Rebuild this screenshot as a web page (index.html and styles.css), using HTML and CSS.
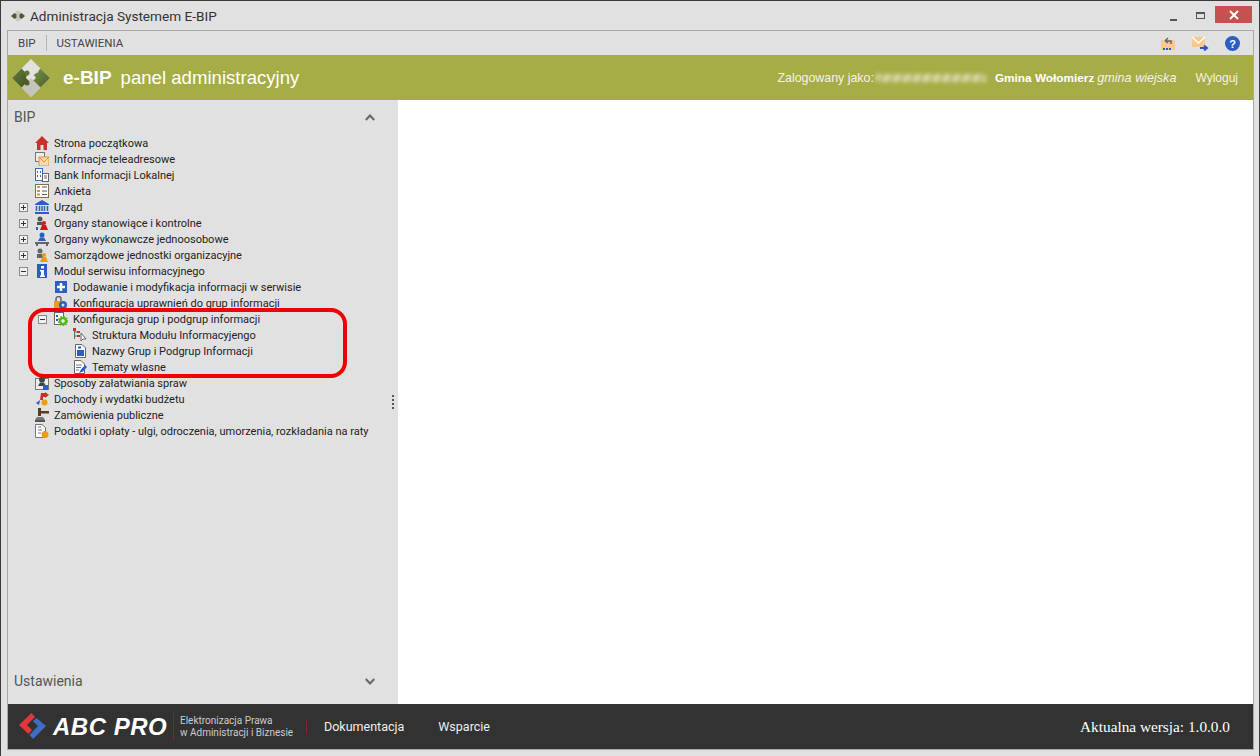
FILE: index.html
```html
<!DOCTYPE html>
<html lang="pl">
<head>
  <meta charset="UTF-8" />
  <title>Administracja Systemem E-BIP</title>
  <link rel="stylesheet" href="styles.css">
</head>
<body>
  <div class="window">
    <div class="titlebar">
      <svg class="app-icon" width="14" height="12" viewBox="0 0 14 12">
        <path d="M7 0 L14 6 L7 12 L0 6Z" fill="#c9c9c0"/>
        <path d="M0 6 L3.500 3 L6 5 L5 6 L6 7 L3.500 9Z" fill="#4d5a35"/>
        <path d="M14 6 L10.500 3 L8 5 L9 6 L8 7 L10.500 9Z" fill="#4d5a35"/>
      </svg>
      <span class="title">Administracja Systemem E-BIP</span>
      <div class="win-buttons">
        <span class="btn-min"></span>
        <span class="btn-max"></span>
        <span class="btn-close">
          <svg width="10" height="10" viewBox="0 0 10 10"><path d="M1 1 L9 9 M9 1 L1 9" stroke="#fff" stroke-width="2"/></svg>
        </span>
      </div>
    </div>

    <div class="frame">
      <div class="menubar">
        <span class="menu-item">BIP</span>
        <span class="menu-sep"></span>
        <span class="menu-item">USTAWIENIA</span>
        <div class="menu-icons">
          <svg width="16" height="16" viewBox="0 0 16 16">
            <rect x="1" y="5" width="14" height="10" fill="#fcc892"/>
            <path d="M5 6 L8 3 M5 6 L8 8 M5 6 H11 V9" stroke="#666" stroke-width="1.500" fill="none"/>
            <path d="M3 13h2v2H3zM6 13h2v2H6zM9 13h2v2H9z" fill="#2b58c4"/>
          </svg>
          <svg width="17" height="16" viewBox="0 0 17 16">
            <rect x="0" y="2" width="13" height="10" fill="#fcc892"/>
            <path d="M0 2 L6.500 8 L13 2" stroke="#fff" stroke-width="1.500" fill="none"/>
            <path d="M8 13 H14 M12 10.500 L15 13 L12 15.500" stroke="#2b58c4" stroke-width="2" fill="none"/>
          </svg>
          <svg width="15" height="15" viewBox="0 0 15 15">
            <circle cx="7.500" cy="7.500" r="7.500" fill="#2a5ec4"/>
            <text x="7.500" y="11.500" class="help-mark" text-anchor="middle">?</text>
          </svg>
        </div>
      </div>

      <header class="banner">
        <svg class="banner-logo" width="38" height="38" viewBox="0 0 38 38">
          <defs>
            <linearGradient id="leaf-l" x1="0" y1="0" x2="1" y2="1">
              <stop offset="0" stop-color="#66803a"/>
              <stop offset="1" stop-color="#3d4f22"/>
            </linearGradient>
            <linearGradient id="leaf-r" x1="0" y1="0" x2="1" y2="1">
              <stop offset="0" stop-color="#7a9146"/>
              <stop offset="1" stop-color="#4a5f2b"/>
            </linearGradient>
          </defs>
          <path d="M19 0 L38 19 L19 38 L0 19Z" fill="#e2e2dc"/>
          <path d="M19 38 L9.500 28.500 L19 19 L28.500 28.500Z" fill="#c4c4ba"/>
          <path d="M0 19 L9.500 9.500 L16 16 C13 17 14 21 17 21 L9.500 28.500Z" fill="url(#leaf-l)"/>
          <circle cx="15" cy="14" r="2.500" fill="#5d7435"/>
          <path d="M38 19 L28.500 9.500 L21 17 C24 16 25 21 21 21 L28.500 28.500Z" fill="url(#leaf-r)"/>
          <circle cx="24" cy="11.500" r="2.500" fill="#e2e2dc"/>
          <circle cx="15" cy="24" r="2.500" fill="#4a5f2b"/>
        </svg>
        <span class="brand">e-BIP</span>
        <span class="brand-sub">panel administracyjny</span>
        <div class="user">
          <span class="user-label">Zalogowany jako:</span>
          <span class="blurred"></span>
          <span class="user-name">Gmina Wołomierz</span>
          <em class="user-kind">gmina wiejska</em>
        </div>
        <span class="logout">Wyloguj</span>
      </header>

      <div class="main">
        <aside class="sidebar">
          <div class="acc-head acc-head-top">
            <span>BIP</span>
            <svg width="10" height="7" viewBox="0 0 10 7"><path d="M0.800 6 L5 1.500 L9.200 6" stroke="#666" stroke-width="2" fill="none"/></svg>
          </div>
          <ul class="tree">
            <li class="row"><span class="tg"></span><svg class="ic" viewBox="0 0 14 14"><path d="M7 0 L14 7 H12 V14 H8.500 V9 H5.500 V14 H2 V7 H0Z" fill="#c8312b"/></svg>Strona początkowa</li>
            <li class="row"><span class="tg"></span><svg class="ic" viewBox="0 0 14 14"><rect x="0.500" y="0.500" width="9" height="9" fill="#eee" stroke="#777"/><rect x="4" y="5" width="10" height="9" fill="#fcd9a8" stroke="#e8903a"/><path d="M4 5 L9 10 L14 5" stroke="#e8903a" fill="none"/></svg>Informacje teleadresowe</li>
            <li class="row"><span class="tg"></span><svg class="ic" viewBox="0 0 14 14"><rect x="0.500" y="0.500" width="7" height="12" fill="#fff" stroke="#2f6db5"/><path d="M2 3h1v2H2zM5 3h1v2H5zM2 7h1v2H2zM5 7h1v2H5z" fill="#2f6db5"/><rect x="7.500" y="5.500" width="6" height="8" fill="#fff" stroke="#666"/><path d="M9 8h3M9 10h3" stroke="#666"/></svg>Bank Informacji Lokalnej</li>
            <li class="row"><span class="tg"></span><svg class="ic" viewBox="0 0 14 14"><rect x="0.500" y="0.500" width="13" height="13" fill="#fff" stroke="#8a6d50"/><path d="M2 3h3M2 7h3M2 10.500h3" stroke="#e8903a" stroke-width="2"/><path d="M7 3h5M7 7h5M7 10.500h5" stroke="#555"/></svg>Ankieta</li>
            <li class="row"><span class="tg plus"></span><svg class="ic" viewBox="0 0 14 14"><path d="M7 0 L14 4 V5 H0 V4Z" fill="#2a5ec4"/><path d="M1.500 6v5M4.500 6v5M7 6v5M9.500 6v5M12.500 6v5" stroke="#2a5ec4" stroke-width="1.500"/><rect x="0" y="12" width="14" height="2" fill="#2a5ec4"/></svg>Urząd</li>
            <li class="row"><span class="tg plus"></span><svg class="ic" viewBox="0 0 14 14"><circle cx="5" cy="3" r="2.500" fill="#555"/><path d="M2 6h6v3H2z" fill="#555"/><circle cx="9" cy="7" r="2" fill="#d7141a"/><path d="M5 14 L7 9 H11 L13 14Z" fill="#d7141a"/><path d="M2 11v3" stroke="#2a5ec4" stroke-width="2"/></svg>Organy stanowiące i kontrolne</li>
            <li class="row"><span class="tg plus"></span><svg class="ic" viewBox="0 0 14 14"><circle cx="7" cy="3" r="2.500" fill="#2a5ec4"/><path d="M3 9 L5 5.500 H9 L11 9Z" fill="#2a5ec4"/><rect x="0" y="10" width="14" height="2" fill="#666"/><path d="M2 12v2M12 12v2" stroke="#666" stroke-width="2"/></svg>Organy wykonawcze jednoosobowe</li>
            <li class="row"><span class="tg plus"></span><svg class="ic" viewBox="0 0 14 14"><circle cx="5" cy="3" r="2.500" fill="#666"/><path d="M2 6h6v4H2z" fill="#666"/><circle cx="9" cy="7" r="2" fill="#f29a12"/><path d="M5 14 L7 9 H11 L13 14Z" fill="#f29a12"/></svg>Samorządowe jednostki organizacyjne</li>
            <li class="row"><span class="tg minus"></span><svg class="ic" viewBox="0 0 14 14"><rect x="2" y="0" width="10" height="14" fill="#2a5ec4"/><rect x="6" y="2" width="3" height="2.500" fill="#fff"/><path d="M5 6h4v5.500h1V13H5v-1.500h1V7.500H5z" fill="#fff"/></svg>Moduł serwisu informacyjnego</li>
            <li class="row lv1"><span class="tg"></span><svg class="ic" viewBox="0 0 14 14"><rect x="1" y="1" width="12" height="12" fill="#2a5ec4"/><path d="M7 3v8M3 7h8" stroke="#fff" stroke-width="2.500"/></svg>Dodawanie i modyfikacja informacji w serwisie</li>
            <li class="row lv1"><span class="tg"></span><svg class="ic" viewBox="0 0 14 14"><path d="M2 5V3a2.500 2.500 0 0 1 5 0v2" stroke="#666" fill="none" stroke-width="1.500"/><rect x="0" y="5" width="7" height="7" fill="#f29a12"/><circle cx="9" cy="9" r="4" fill="#2a5ec4"/><circle cx="9" cy="9" r="1.500" fill="#e1e1e1"/></svg>Konfiguracja uprawnień do grup informacji</li>
            <li class="row lv1"><span class="tg minus"></span><svg class="ic" viewBox="0 0 14 14"><rect x="0.500" y="0.500" width="9" height="12" fill="#fff" stroke="#666"/><path d="M2 3h2v2H2zM2 7h2v2H2z" fill="#2a5ec4"/><circle cx="9" cy="9" r="3" fill="#fff" stroke="#58b51a" stroke-width="2.500"/><circle cx="9" cy="9" r="4.500" fill="none" stroke="#58b51a" stroke-width="1.500" stroke-dasharray="1.500 1.500"/></svg>Konfiguracja grup i podgrup informacji</li>
            <li class="row lv2"><span class="tg"></span><svg class="ic" viewBox="0 0 14 14"><path d="M1.500 1v10M1.500 4h3M1.500 8h3" stroke="#666"/><path d="M0 0h3v3H0zM4 3h3v2H4zM4 7h3v2H4z" fill="#c8312b"/><path d="M8 5 V13 L10 11 L13 11Z" fill="#fff" stroke="#666"/></svg>Struktura Modułu Informacyjengo</li>
            <li class="row lv2"><span class="tg"></span><svg class="ic" viewBox="0 0 14 14"><path d="M2.500 0.500H9L12.500 4V13.500H2.500Z" fill="#fff" stroke="#666"/><rect x="5" y="2.500" width="3" height="2" fill="#2a5ec4"/><rect x="4" y="6" width="7" height="6" fill="#2a5ec4"/></svg>Nazwy Grup i Podgrup Informacji</li>
            <li class="row lv2"><span class="tg"></span><svg class="ic" viewBox="0 0 14 14"><path d="M1.500 0.500H8L11.500 4V13.500H1.500Z" fill="#fff" stroke="#666"/><path d="M3 5h6M3 7.500h5M3 10h3" stroke="#777"/><path d="M6 13 L8 9.500 L12 5 L14 7 L10 11.500Z" fill="#2a5ec4"/></svg>Tematy własne</li>
            <li class="row"><span class="tg"></span><svg class="ic" viewBox="0 0 14 14"><rect x="0.500" y="2.500" width="13" height="11" fill="#eee" stroke="#777"/><circle cx="7" cy="3.500" r="3" fill="#444"/><path d="M3 10 L5 6.500 H9 L11 10Z" fill="#444"/><rect x="8" y="9" width="5" height="5" fill="#2a5ec4"/></svg>Sposoby załatwiania spraw</li>
            <li class="row"><span class="tg"></span><svg class="ic" viewBox="0 0 14 14"><path d="M6 1 H10 V0 L14 3 L10 6 V5 H8 V8 H5Z" fill="#c8312b"/><path d="M5 8 L1 11 L4 13Z" fill="#2a5ec4"/><circle cx="9.500" cy="10.500" r="3" fill="#f29a12"/></svg>Dochody i wydatki budżetu</li>
            <li class="row"><span class="tg"></span><svg class="ic" viewBox="0 0 14 14"><rect x="3" y="0" width="3" height="8" fill="#5a3d22"/><rect x="6" y="3" width="8" height="2.500" fill="#5a3d22"/><path d="M2 9h6l2 3H0z" fill="#777"/><rect x="0" y="12" width="10" height="2" fill="#555"/></svg>Zamówienia publiczne</li>
            <li class="row"><span class="tg"></span><svg class="ic" viewBox="0 0 14 14"><path d="M0.500 0.500H7L10.500 3.500V13.500H0.500Z" fill="#fff" stroke="#777"/><path d="M3 3h3M3 6h4M3 9h3" stroke="#777"/><circle cx="10" cy="10.500" r="3.500" fill="#f29a12"/></svg>Podatki i opłaty - ulgi, odroczenia, umorzenia, rozkładania na raty</li>
          </ul>
          <div class="highlight"></div>
          <div class="acc-head acc-head-bottom">
            <span>Ustawienia</span>
            <svg width="10" height="7" viewBox="0 0 10 7"><path d="M0.800 1 L5 5.500 L9.200 1" stroke="#666" stroke-width="2" fill="none"/></svg>
          </div>
        </aside>
        <div class="splitter"><i></i><i></i><i></i><i></i></div>
        <section class="content"></section>
      </div>

      <footer class="footer">
        <svg class="abc-mark" width="28" height="27" viewBox="0 0 28 27">
          <path d="M0 12 L12.500 0 L16 4 L8 12 L13 17 L9.500 21Z" fill="#e0383a"/>
          <path d="M27 13 L14 26 L10.500 22 L19 13 L14 8 L17.500 5Z" fill="#3f6cc4"/>
        </svg>
        <span class="abc-name">ABC PRO</span>
        <span class="abc-tag">Elektronizacja Prawa<br>w Administracji i Biznesie</span>
        <a class="foot-link foot-first">Dokumentacja</a>
        <a class="foot-link">Wsparcie</a>
        <span class="version">Aktualna wersja: 1.0.0.0</span>
      </footer>
    </div>
  </div>
</body>
</html>
```

FILE: styles.css
```css
html, body {
  margin: 0;
  height: 100%;
}

body {
  font-family: "Liberation Sans", Arial, sans-serif;
  overflow: hidden;
}

.window {
  box-sizing: border-box;
  width: 1260px;
  height: 756px;
  display: flex;
  flex-direction: column;
  background: #e1e1e1;
  border: 1px solid #3a3a3a;
  border-bottom: 0;
  color: #333;
}

.titlebar {
  height: 29px;
  flex: none;
  display: flex;
  align-items: center;
  padding-left: 10px;
}

.app-icon {
  margin-right: 5px;
}

.title {
  font-family: Roboto, sans-serif;
  font-size: 13.6px;
  color: #333;
}

.win-buttons {
  margin-left: auto;
  display: flex;
  align-items: center;
  margin-right: 7px;
  margin-top: -2px;
}

.btn-min {
  width: 7px;
  height: 2px;
  margin-top: 11px;
  margin-right: 19px;
  background: #555;
}

.btn-max {
  box-sizing: border-box;
  width: 9px;
  height: 7px;
  margin-top: 1px;
  margin-right: 10px;
  border: 1px solid #555;
  border-top-width: 2px;
}

.btn-close {
  width: 37px;
  height: 17px;
  background: #c75050;
  display: flex;
  align-items: center;
  justify-content: center;
}

.frame {
  flex: 1;
  min-height: 0;
  margin: 0 5px 6px 6px;
  border: 1px solid #a9a9a9;
  display: flex;
  flex-direction: column;
}

.menubar {
  height: 24px;
  flex: none;
  display: flex;
  align-items: center;
  font-family: Roboto, sans-serif;
  font-size: 11.5px;
  padding-left: 10px;
  color: #444;
}

.menu-sep {
  width: 1px;
  height: 16px;
  background: #b5b5b5;
  margin: 0 10px;
}

.menu-icons {
  margin-left: auto;
  margin-right: 13px;
  display: flex;
  align-items: center;
  gap: 16px;
}

.help-mark {
  font: bold 11px "Liberation Sans", sans-serif;
  fill: #fff;
}

.banner {
  height: 45px;
  flex: none;
  background: #a6ad46;
  display: flex;
  align-items: center;
  color: #fff;
  padding-left: 4px;
  font-size: 12px;
}

.banner-logo {
  margin-right: 13px;
}

.brand {
  font-size: 19px;
  font-weight: bold;
  margin-right: 9px;
}

.brand-sub {
  font-size: 18.6px;
}

.user {
  margin-left: auto;
  display: flex;
  align-items: center;
}

.user-label {
  font-size: 12.4px;
  color: #f4f4e4;
}

.blurred {
  width: 110px;
  height: 8px;
  margin: 0 9px 0 2px;
  background: repeating-linear-gradient(115deg, rgba(255, 255, 255, 0.6) 0 5px, rgba(255, 255, 255, 0.2) 5px 9px);
  filter: blur(2px);
}

.user-name {
  font-size: 11.8px;
  font-weight: bold;
  margin-right: 3px;
}

.user-kind {
  font-size: 12.6px;
  color: #f4f4e4;
}

.logout {
  margin-left: 19px;
  margin-right: 15px;
  color: #f4f4e4;
}

.main {
  flex: 1;
  min-height: 0;
  display: flex;
}

.sidebar {
  position: relative;
  width: 380px;
  flex: none;
  display: flex;
  flex-direction: column;
}

.acc-head {
  height: 34px;
  flex: none;
  display: flex;
  align-items: center;
  justify-content: space-between;
  padding: 0 13px 0 6px;
  font-family: Roboto, sans-serif;
  font-size: 14px;
  color: #555;
}

.acc-head-bottom {
  margin-top: auto;
  margin-bottom: 6px;
}

.tree {
  list-style: none;
  margin: 0;
  padding: 1px 0 0 11px;
  font-family: Roboto, sans-serif;
  font-size: 11px;
  color: #222;
}

.row {
  height: 16px;
  display: flex;
  align-items: center;
  white-space: nowrap;
}

.lv1 {
  padding-left: 19px;
}

.lv2 {
  padding-left: 38px;
}

.tg {
  box-sizing: border-box;
  width: 9px;
  height: 9px;
  flex: none;
  margin-right: 7px;
  position: relative;
}

.plus, .minus {
  border: 1px solid #8a8a8a;
  background: #f0f0f0;
}

.plus::before, .minus::before {
  content: '';
  position: absolute;
  left: 1px;
  top: 3px;
  width: 5px;
  height: 1px;
  background: #333;
}

.plus::after {
  content: '';
  position: absolute;
  left: 3px;
  top: 1px;
  width: 1px;
  height: 5px;
  background: #333;
}

.ic {
  width: 14px;
  height: 14px;
  flex: none;
  margin-right: 5px;
}

.highlight {
  position: absolute;
  left: 20px;
  top: 208px;
  box-sizing: border-box;
  width: 319px;
  height: 70px;
  border: 4px solid #f00000;
  border-radius: 16px;
}

.splitter {
  width: 10px;
  flex: none;
  display: flex;
  flex-direction: column;
  align-items: center;
  justify-content: center;
  gap: 2px;
}

.splitter i {
  width: 2px;
  height: 2px;
  background: #555;
}

.content {
  flex: 1;
  background: #fff;
}

.footer {
  height: 45px;
  flex: none;
  background: #323232;
  display: flex;
  align-items: center;
  color: #e6e6e6;
  padding-left: 11px;
}

.abc-mark {
  margin-right: 6px;
}

.abc-name {
  font-family: "Liberation Sans", sans-serif;
  font-size: 24px;
  font-weight: bold;
  font-style: italic;
  color: #fff;
  letter-spacing: 0.5px;
  width: 120px;
  white-space: nowrap;
}

.abc-tag {
  box-sizing: border-box;
  border-left: 1px solid #7a2a2a;
  padding-left: 6px;
  font-family: Roboto, sans-serif;
  font-size: 10px;
  line-height: 12px;
  color: #ccc;
  height: 28px;
  display: flex;
  align-items: center;
  width: 133px;
  white-space: nowrap;
}

.foot-link {
  font-family: Roboto, sans-serif;
  font-size: 12.5px;
  color: #eee;
  margin-right: 34px;
}

.foot-first {
  border-left: 1px solid #7a2a2a;
  padding-left: 17px;
}

.version {
  margin-left: auto;
  margin-right: 23px;
  font-family: "Liberation Serif", serif;
  font-size: 15.3px;
  color: #fff;
}
```
